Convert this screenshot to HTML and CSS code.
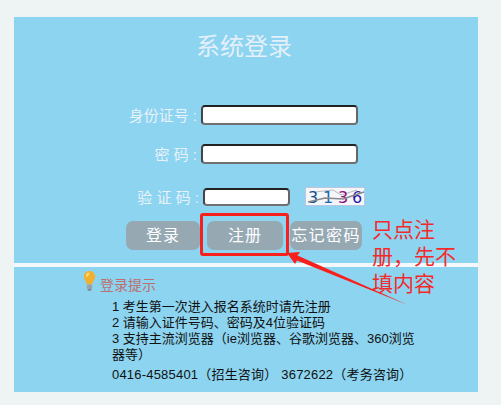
FILE: index.html
```html
<!DOCTYPE html>
<html>
<head>
  <meta charset="utf-8">
  <title>系统登录</title>
  <link rel="stylesheet" href="styles.css">
</head>
<body>
  <div class="panel">
    <h1 class="title">系统登录</h1>
    <form class="loginform">
      <div class="row row1">
        <label class="lbl">身份证号 :</label>
        <input class="ipt" type="text">
      </div>
      <div class="row row2">
        <label class="lbl">密 码 :</label>
        <input class="ipt" type="password">
      </div>
      <div class="row row3">
        <label class="lbl lbl3">验 证 码 :</label>
        <input class="ipt ipt3" type="text">
        <svg class="captcha" width="60" height="19" viewBox="0 0 60 19">
          <rect x="0.5" y="0.5" width="59" height="18" fill="#f4f6fa" stroke="#b9a9c9" stroke-dasharray="1 1"/>
          <path d="M10 5 L28 3 L36 8 L52 3" stroke="#bbb" stroke-width="1" fill="none"/>
          <text x="3" y="16" class="digit" fill="#0a4f8c">3</text>
          <text x="18" y="16" class="digit" fill="#1769b0">1</text>
          <text x="33" y="16" class="digit" fill="#8c0a7c">3</text>
          <text x="47" y="16" class="digit" fill="#2a1ca8">6</text>
          <path d="M3 15 L20 11 L38 12 L59 5" stroke="#8a8a8a" stroke-width="1.5" fill="none"/>
        </svg>
      </div>
      <div class="btns">
        <button type="button" class="btn btn-login">登录</button>
        <button type="button" class="btn btn-reg">注册</button>
        <button type="button" class="btn btn-forget">忘记密码</button>
      </div>
    </form>
    <div class="divider"></div>
    <div class="tips">
      <div class="tiphead">
        <svg class="bulb" width="13" height="21" viewBox="0 0 15 23" preserveAspectRatio="none">
          <path d="M7.5 1C3.6 1 1 3.8 1 7.2c0 3 2.2 4.4 3 6.8.2.7.3 1.2.4 1.8h6.2c.1-.6.2-1.1.4-1.8.8-2.4 3-3.8 3-6.8C14 3.8 11.4 1 7.5 1z" fill="#f3b02c"/>
          <path d="M5 3.5C3.8 4.5 3.2 6 3.4 7.6 5 7.4 7 5.6 7.6 3 6.6 2.8 5.8 3 5 3.5z" fill="#fbdc8a"/>
          <rect x="4.5" y="16" width="6" height="5" rx="1" fill="#9aa5ab"/>
          <rect x="5.5" y="21" width="4" height="1.5" fill="#6f7a80"/>
        </svg>
        <span class="tiptitle">登录提示</span>
      </div>
      <div class="tiplist">
        <p>1 考生第一次进入报名系统时请先注册</p>
        <p>2 请输入证件号码、密码及4位验证码</p>
        <p>3 支持主流浏览器（ie浏览器、谷歌浏览器、360浏览器等）</p>
        <p class="phone">0416-4585401（招生咨询） 3672622（考务咨询）</p>
      </div>
    </div>
  </div>

  <!-- 截图上的红色标注 -->
  <div class="markbox"></div>
  <svg class="markarrow" width="125" height="56" viewBox="0 0 125 56">
    <polygon points="0,1 13,0 10.5,3.5 121,53 10,8.5 8,12" fill="#f8201c"/>
  </svg>
  <div class="marktext">只点注<br>册，先不<br>填内容</div>
</body>
</html>
```

FILE: styles.css
```css
body {
  margin: 0;
  height: 405px;
  overflow: hidden;
  padding: 17px 23px 0 14px;
  box-sizing: border-box;
  background-color: #eef4f4;
  font-family: "Liberation Sans", "Noto Sans CJK SC", sans-serif;
}

.panel {
  height: 375px;
  background-color: #8cd4f0;
  overflow: hidden;
}

.title {
  margin: 0;
  padding: 13px 4px 0 0;
  height: 34px;
  line-height: 34px;
  font-size: 24px;
  font-weight: normal;
  text-align: center;
  color: #e4f0fa;
}

.loginform {
  padding-top: 41px;
}

.row {
  display: flex;
  align-items: center;
}

.row1 {
  height: 20px;
}

.row2 {
  height: 20px;
  margin-top: 19px;
}

.row3 {
  height: 19px;
  margin-top: 23px;
}

.lbl {
  width: 187px;
  box-sizing: border-box;
  padding-right: 4px;
  margin-bottom: 2px;
  text-align: right;
  font-size: 15px;
  color: #e8f2fa;
}

.lbl3 {
  width: 189px;
  margin-bottom: 0;
}

.ipt {
  width: 157px;
  height: 20px;
  box-sizing: border-box;
  padding: 0 3px;
  margin: 0;
  background: white;
  border: 2px solid;
  border-color: #222 #666 #707070 #444;
  border-radius: 4px;
  outline: none;
}

.ipt3 {
  width: 87px;
  height: 18px;
}

.captcha {
  margin-left: 15px;
  overflow: visible;
}

.digit {
  font-family: "DejaVu Sans", sans-serif;
  font-size: 16px;
}

.btns {
  display: flex;
  gap: 7px;
  margin-top: 15px;
  padding-left: 112px;
}

.btn {
  height: 29px;
  padding: 0 0 3px;
  border: none;
  border-radius: 7px;
  background-color: #96a9b3;
  color: white;
  font-family: inherit;
  font-size: 16px;
  letter-spacing: 1px;
}

.btn-login {
  width: 74px;
}

.btn-reg {
  width: 76px;
}

.btn-forget {
  width: 72px;
  white-space: nowrap;
  letter-spacing: 1.4px;
}

.divider {
  height: 4px;
  margin-top: 13px;
  background-color: #f2f8fb;
}

.tips {
  position: relative;
  padding-left: 69px;
}

.tiphead {
  display: flex;
  align-items: flex-end;
  gap: 4px;
  padding-top: 3px;
  height: 24px;
}

.bulb {
  flex: none;
  align-self: flex-start;
}

.tiptitle {
  font-size: 14px;
  color: #bd6f6f;
}

.tiplist {
  margin: 5px 0 0 29px;
  width: 310px;
  font-size: 13px;
  line-height: 16px;
  color: #111;
}

.tiplist p {
  margin: 0;
}

.tiplist .phone {
  margin-top: 4px;
  letter-spacing: 0.2px;
  white-space: nowrap;
}

.markbox {
  position: absolute;
  left: 200px;
  top: 213px;
  width: 83px;
  height: 37px;
  border: 3px solid #f8201c;
  border-radius: 3px;
}

.markarrow {
  position: absolute;
  left: 287px;
  top: 252px;
}

.marktext {
  position: absolute;
  left: 372px;
  top: 216px;
  font-size: 21px;
  line-height: 27px;
  color: #f42a2a;
  white-space: nowrap;
}
```
